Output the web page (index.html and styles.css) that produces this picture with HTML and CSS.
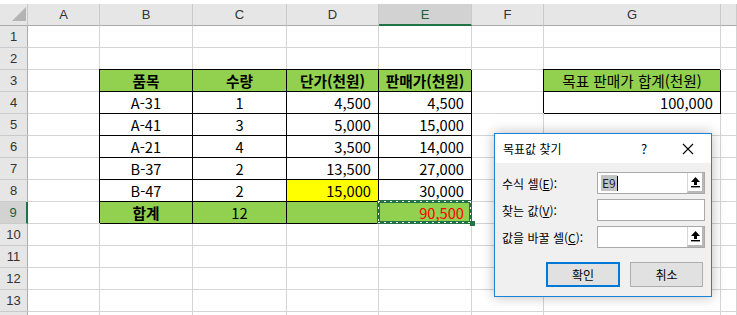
FILE: index.html
```html
<!DOCTYPE html>
<html lang="ko">
<head>
<meta charset="utf-8">
<title>목표값 찾기</title>
<link rel="stylesheet" href="styles.css">
</head>
<body>
<div class="sheet">
  <div class="h corner"><svg width="28" height="21" viewBox="0 0 28 21"><polygon points="26,3 26,17 12,17" fill="#b4b4b4"/></svg></div>
  <div class="h">A</div><div class="h">B</div><div class="h">C</div><div class="h">D</div><div class="h sel">E</div><div class="h">F</div><div class="h">G</div><div class="h"></div>

  <div class="rh">1</div><div class="c"></div><div class="c"></div><div class="c"></div><div class="c"></div><div class="c"></div><div class="c"></div><div class="c"></div><div class="c"></div>
  <div class="rh">2</div><div class="c"></div><div class="c"></div><div class="c"></div><div class="c"></div><div class="c"></div><div class="c"></div><div class="c"></div><div class="c"></div>

  <div class="rh">3</div><div class="c"></div>
  <div class="c t g ctr b">품목</div><div class="c t g ctr b">수량</div><div class="c t g ctr b">단가(천원)</div><div class="c t g ctr b">판매가(천원)</div>
  <div class="c"></div><div class="c t g ctr">목표 판매가 합계(천원)</div><div class="c"></div>

  <div class="rh">4</div><div class="c"></div>
  <div class="c t ctr">A-31</div><div class="c t ctr">1</div><div class="c t num">4,500</div><div class="c t num">4,500</div>
  <div class="c"></div><div class="c t num">100,000</div><div class="c"></div>

  <div class="rh">5</div><div class="c"></div>
  <div class="c t ctr">A-41</div><div class="c t ctr">3</div><div class="c t num">5,000</div><div class="c t num">15,000</div>
  <div class="c"></div><div class="c"></div><div class="c"></div>

  <div class="rh">6</div><div class="c"></div>
  <div class="c t ctr">A-21</div><div class="c t ctr">4</div><div class="c t num">3,500</div><div class="c t num">14,000</div>
  <div class="c"></div><div class="c"></div><div class="c"></div>

  <div class="rh">7</div><div class="c"></div>
  <div class="c t ctr">B-37</div><div class="c t ctr">2</div><div class="c t num">13,500</div><div class="c t num">27,000</div>
  <div class="c"></div><div class="c"></div><div class="c"></div>

  <div class="rh">8</div><div class="c"></div>
  <div class="c t ctr">B-47</div><div class="c t ctr">2</div><div class="c t num y">15,000</div><div class="c t num">30,000</div>
  <div class="c"></div><div class="c"></div><div class="c"></div>

  <div class="rh sel">9</div><div class="c"></div>
  <div class="c t g ctr b">합계</div><div class="c t g ctr">12</div><div class="c t g"></div>
  <div class="c t g num red active">90,500<span class="ants"></span><span class="handle"></span></div>
  <div class="c"></div><div class="c"></div><div class="c"></div>

  <div class="rh">10</div><div class="c"></div><div class="c"></div><div class="c"></div><div class="c"></div><div class="c"></div><div class="c"></div><div class="c"></div><div class="c"></div>
  <div class="rh">11</div><div class="c"></div><div class="c"></div><div class="c"></div><div class="c"></div><div class="c"></div><div class="c"></div><div class="c"></div><div class="c"></div>
  <div class="rh">12</div><div class="c"></div><div class="c"></div><div class="c"></div><div class="c"></div><div class="c"></div><div class="c"></div><div class="c"></div><div class="c"></div>
  <div class="rh">13</div><div class="c"></div><div class="c"></div><div class="c"></div><div class="c"></div><div class="c"></div><div class="c"></div><div class="c"></div><div class="c"></div>
  <div class="rh"></div><div class="c"></div><div class="c"></div><div class="c"></div><div class="c"></div><div class="c"></div><div class="c"></div><div class="c"></div><div class="c"></div>
</div>

<div class="dlg">
  <div class="dlg-title">
    <span class="dlg-name">목표값 찾기</span>
    <span class="dlg-help">?</span>
    <span class="dlg-close"><svg width="12" height="12" viewBox="0 0 12 12"><path d="M1 1 L11 11 M11 1 L1 11" stroke="#000" stroke-width="1.1" fill="none"/></svg></span>
  </div>
  <div class="dlg-body">
    <div class="field">
      <span class="lbl">수식 셀(<u>E</u>):</span>
      <div class="inp"><span class="val"><span class="hl">E9</span><span class="caret"></span></span><span class="pick"><svg width="11" height="12" viewBox="0 0 11 12"><path d="M5.5 1 L10 6 L7 6 L7 9 L4 9 L4 6 L1 6 Z" fill="#000"/><rect x="1" y="10" width="9" height="1.4" fill="#000"/></svg></span></div>
    </div>
    <div class="field">
      <span class="lbl">찾는 값(<u>V</u>):</span>
      <div class="inp"></div>
    </div>
    <div class="field">
      <span class="lbl">값을 바꿀 셀(<u>C</u>):</span>
      <div class="inp"><span class="val"></span><span class="pick"><svg width="11" height="12" viewBox="0 0 11 12"><path d="M5.5 1 L10 6 L7 6 L7 9 L4 9 L4 6 L1 6 Z" fill="#000"/><rect x="1" y="10" width="9" height="1.4" fill="#000"/></svg></span></div>
    </div>
    <div class="btns">
      <span class="btn def">확인</span>
      <span class="btn">취소</span>
    </div>
  </div>
</div>
</body>
</html>
```

FILE: styles.css
```css
html, body {
  margin: 0;
}
body {
  width: 737px;
  height: 315px;
  overflow: hidden;
  background: #fff;
  padding-top: 4px;
  box-sizing: border-box;
  position: relative;
  font-family: "Noto Sans CJK KR", sans-serif;
}
.sheet {
  display: grid;
  grid-template-columns: 28px 72px 93px 94px 92px 93px 72px 177px 16px;
  grid-auto-rows: 22px;
}
.c {
  box-sizing: border-box;
  border-right: 1px solid #d4d4d4;
  border-bottom: 1px solid #d4d4d4;
  font-size: 14.67px;
  line-height: 21px;
  color: #000;
  white-space: nowrap;
  display: flex;
  align-items: center;
  padding: 0 3px;
}
.ctr { justify-content: center; }
.num { justify-content: flex-end; padding-right: 7px; }
.b { font-weight: bold; }
.t {
  border-right-color: #000;
  border-bottom-color: #000;
  box-shadow: -1px -1px 0 #000;
}
.g { background: #92d050; }
.y { background: #ffff00; }
.red { color: #ff0000; }

.h {
  box-sizing: border-box;
  background: #e6e6e6;
  border-right: 1px solid #cacaca;
  border-bottom: 1px solid #ababab;
  font-family: "Liberation Sans", Arial, sans-serif;
  font-size: 13px;
  color: #333;
  display: flex;
  align-items: center;
  justify-content: center;
}
.h.sel {
  background: #d2d2d2;
  border-bottom: 2px solid #217346;
  color: #1d5e3c;
}
.corner { display: block; }
.corner svg { display: block; }
.rh {
  box-sizing: border-box;
  background: #e6e6e6;
  border-right: 1px solid #ababab;
  border-bottom: 1px solid #cacaca;
  font-family: "Liberation Sans", Arial, sans-serif;
  font-size: 13px;
  color: #333;
  display: flex;
  align-items: center;
  justify-content: center;
}
.rh.sel {
  background: #d2d2d2;
  border-right: 2px solid #217346;
  color: #1d5e3c;
}

.active { position: relative; }
.ants {
  position: absolute;
  left: -2px;
  top: -2px;
  right: -1px;
  bottom: -1px;
  border: 3px solid #217346;
  z-index: 2;
}
.ants::after {
  content: "";
  position: absolute;
  left: -2px;
  top: -2px;
  right: -2px;
  bottom: -2px;
  background:
    repeating-linear-gradient(90deg, #fff 0 2px, transparent 2px 6px) left top / 100% 1px no-repeat,
    repeating-linear-gradient(90deg, #fff 0 2px, transparent 2px 6px) left bottom / 100% 1px no-repeat,
    repeating-linear-gradient(180deg, #fff 0 2px, transparent 2px 6px) left top / 1px 100% no-repeat,
    repeating-linear-gradient(180deg, #fff 0 2px, transparent 2px 6px) right top / 1px 100% no-repeat;
}
.handle {
  position: absolute;
  right: -4px;
  bottom: -3px;
  width: 5px;
  height: 5px;
  background: #217346;
  z-index: 3;
}

.dlg {
  position: absolute;
  left: 494px;
  top: 133px;
  width: 218px;
  height: 164px;
  box-sizing: border-box;
  border: 1px solid #1883d7;
  background: #f0f0f0;
  box-shadow: 0 0 12px rgba(0, 0, 0, 0.28);
  z-index: 10;
  font-size: 12px;
  color: #000;
  display: flex;
  flex-direction: column;
}
.dlg-title {
  height: 29px;
  background: #fff;
  display: flex;
  align-items: center;
  padding-left: 8px;
}
.dlg-name { flex: 1; }
.dlg-help {
  width: 14px;
  margin-right: 31px;
  text-align: center;
  font-size: 13px;
}
.dlg-close {
  width: 12px;
  height: 12px;
  margin-right: 17px;
  display: flex;
}
.dlg-body {
  flex: 1;
  padding: 9px 6px 0 7px;
  display: flex;
  flex-direction: column;
  gap: 5px;
}
.field {
  display: flex;
  align-items: center;
  height: 22px;
}
.lbl {
  width: 95px;
  white-space: nowrap;
}
.lbl u { text-underline-offset: 1px; }
.inp {
  width: 108px;
  height: 22px;
  box-sizing: border-box;
  border: 1px solid #a9a9a9;
  background: #fff;
  display: flex;
}
.val {
  flex: 1;
  display: flex;
  align-items: center;
  padding-left: 3px;
}
.hl {
  background: #c4c4c4;
  color: #1a1a40;
  line-height: 16px;
  padding: 0 1px;
}
.caret {
  width: 1px;
  height: 15px;
  background: #000;
}
.pick {
  width: 17px;
  box-sizing: border-box;
  border-left: 1px solid #d6d6d6;
  border-right: 2px solid #b8b8b8;
  border-bottom: 2px solid #b8b8b8;
  display: flex;
  align-items: center;
  justify-content: center;
}
.btns {
  margin-top: 9px;
  display: flex;
  justify-content: flex-end;
  gap: 10px;
  padding-right: 2px;
}
.btn {
  width: 73px;
  height: 25px;
  box-sizing: border-box;
  border: 1px solid #adadad;
  background: #e1e1e1;
  display: flex;
  align-items: center;
  justify-content: center;
}
.btn.def {
  width: 74px;
  border: 2px solid #0078d7;
}
```
